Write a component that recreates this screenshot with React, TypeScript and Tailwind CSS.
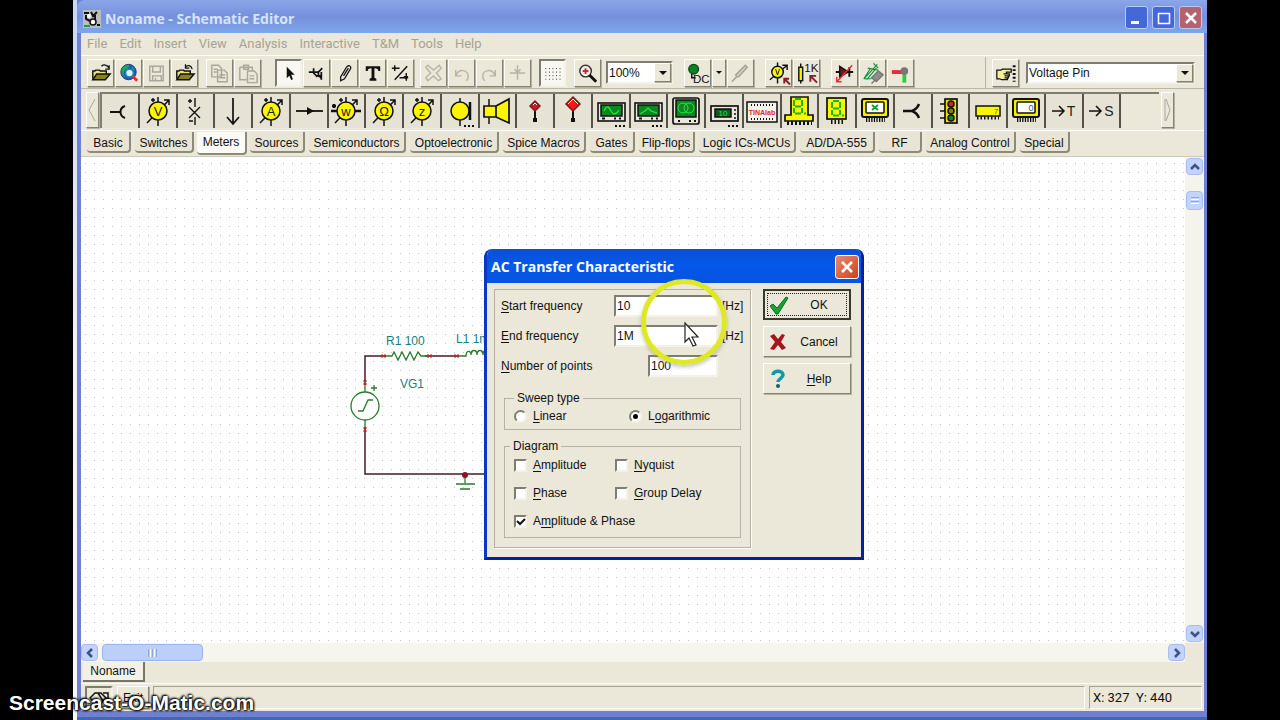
import React, { useState } from "react";

const raised =
  "border border-t-white border-l-white border-r-[#85826f] border-b-[#85826f] shadow-[1px_1px_0_#b5b2a0]";
const sunken =
  "border-2 border-t-[#7f7d70] border-l-[#7f7d70] border-r-[#f4f2e8] border-b-[#f4f2e8]";

const menus = ["File", "Edit", "Insert", "View", "Analysis", "Interactive", "T&M", "Tools", "Help"];

const tabs = [
  { name: "Basic", width: "w-11" },
  { name: "Switches", width: "w-[59px]" },
  { name: "Meters", width: "w-[50px]" },
  { name: "Sources", width: "w-[55px]" },
  { name: "Semiconductors", width: "w-[97px]" },
  { name: "Optoelectronic", width: "w-[89px]" },
  { name: "Spice Macros", width: "w-[83px]" },
  { name: "Gates", width: "w-[45px]" },
  { name: "Flip-flops", width: "w-14" },
  { name: "Logic ICs-MCUs", width: "w-[97px]" },
  { name: "AD/DA-555", width: "w-[75px]" },
  { name: "RF", width: "w-[43px]" },
  { name: "Analog Control", width: "w-[90px]" },
  { name: "Special", width: "w-[50px]" },
];

const Svg = ({ children }: { children: React.ReactNode }) => (
  <svg viewBox="0 0 26 26" className="h-[26px] w-[26px]" fill="none" stroke="#111" strokeWidth="1.5">
    {children}
  </svg>
);

const Tool = ({
  label,
  pressed,
  children,
}: {
  label: string;
  pressed?: boolean;
  children: React.ReactNode;
}) => (
  <button
    type="button"
    aria-label={label}
    className={`flex h-7 w-[27px] shrink-0 items-center justify-center overflow-hidden ${
      pressed ? `bg-[#f8f7f1] ${sunken}` : `bg-[#ebe8d9] ${raised}`
    }`}
  >
    {children}
  </button>
);

const Group = ({ children }: { children: React.ReactNode }) => (
  <div className="flex items-center gap-px">{children}</div>
);

const FolderIcon = ({ back }: { back?: boolean }) => (
  <Svg>
    <path d="M5 19V11h2l1-1h4l1 1h6v3" fill="#e8e27a" />
    <path d="M5 20l4-6h14l-5 6z" fill="#85841c" />
    {back ? (
      <path d="M14 7c2-3 6-2 7 2M14 4v4h4" strokeWidth="1.3" />
    ) : (
      <path d="M14 6c2-2 6-2 8 2M22 5v4h-4" strokeWidth="1.3" />
    )}
  </Svg>
);

const Meter = ({ letter, side }: { letter: string; side?: boolean }) => (
  <>
    <path d="M6 29L28 6M23 6h5v5M17 3v6M17 26v6M10 6h4M12 4v4" strokeWidth="1.5" />
    {side && <path d="M2 17h30M3 12h4M5 10v4" strokeWidth="2.4" />}
    <circle cx="17" cy="17" r="9" fill="#fbf500" strokeWidth="1.5" />
    <text x="17" y="22" textAnchor="middle" fontSize="13" fill="#222" stroke="none">
      {letter}
    </text>
  </>
);

const Dots = () => <path d="M21 32h10" strokeWidth="2" strokeDasharray="2 2" />;

const Scope = ({ wave }: { wave: string }) => (
  <>
    <rect x="4" y="9" width="27" height="18" fill="#e9e7dc" strokeWidth="1.6" />
    <rect x="7" y="11" width="21" height="11" fill="#068a1c" />
    <path d={wave} stroke="#35e04f" strokeWidth="1.2" />
    <path d="M8 24.5h3M20 24.5h2M25 24.5h2" strokeWidth="2" />
    <Dots />
  </>
);

const Seven = ({ x, y }: { x: number; y: number }) => (
  <path
    transform={`translate(${x} ${y})`}
    d="M1 0h6M0 1v6M8 1v6M1 7.500h6M0 9v5M8 9v5M1 14.500h6M10 14.500h2"
    stroke="#19b31b"
    strokeWidth="2"
  />
);

const Screen = ({ children }: { children: React.ReactNode }) => (
  <>
    <rect x="4" y="5" width="26" height="18" rx="2" fill="#f7ee00" strokeWidth="2" />
    <rect x="8" y="8" width="18" height="11" rx="1" fill="#fff" />
    <path d="M8 26h19" strokeWidth="4" strokeDasharray="1.300 1.300" />
    {children}
  </>
);

const parts: { name: string; icon: React.ReactNode }[] = [
  { name: "Voltage Pin", icon: <path d="M7 18h9M22 12c-6 2-6 10 0 12M16 18h2" strokeWidth="2" /> },
  { name: "Voltmeter", icon: <Meter letter="V" /> },
  {
    name: "Open Circuit",
    icon: <path d="M17 4v9M17 23v8M11 13l11 11M22 13L11 24M10 7h4M12 5v4M11 27h4" strokeWidth="1.4" />,
  },
  { name: "Voltage Arrow", icon: <path d="M17 4v26M11 23l6 7 6-7" strokeWidth="1.7" /> },
  { name: "Ammeter", icon: <Meter letter="A" /> },
  {
    name: "Current Arrow",
    icon: (
      <>
        <path d="M4 17h27" strokeWidth="1.8" />
        <path d="M15 13l7 4-7 4z" fill="#111" stroke="none" />
      </>
    ),
  },
  { name: "Power Meter", icon: <Meter letter="w" side /> },
  { name: "Ohmmeter", icon: <Meter letter="Ω" /> },
  { name: "Impedance Meter", icon: <Meter letter="z" /> },
  {
    name: "Microphone",
    icon: (
      <>
        <path d="M17 4v28" />
        <circle cx="17" cy="17" r="9" fill="#fbf500" />
        <path d="M27 8v18" strokeWidth="2.5" />
        <Dots />
      </>
    ),
  },
  {
    name: "Loudspeaker",
    icon: (
      <>
        <path d="M9 5v25" />
        <path d="M4 12h12v11H4zM16 12l13-7v24l-13-6z" fill="#fbf500" strokeWidth="1.700" />
      </>
    ),
  },
  {
    name: "Logic Indicator",
    icon: (
      <>
        <path d="M17 17v8" strokeWidth="2" />
        <path d="M17 7l5 5-5 5-5-5z" fill="#c21d2c" stroke="#772020" />
        <path d="M15 11l2-2 2 2" stroke="#fff" strokeWidth="1" />
        <rect x="15" y="24" width="4" height="4" fill="#111" stroke="none" />
      </>
    ),
  },
  {
    name: "Probe Lamp",
    icon: (
      <>
        <path d="M17 16v9" strokeWidth="2" />
        <path d="M17 3l7 7-7 7-7-7z" fill="#f31919" stroke="#772020" />
        <path d="M12 10l5-5 5 5" stroke="#fff" strokeWidth="1" />
        <rect x="15" y="24" width="4" height="4" fill="#111" stroke="none" />
      </>
    ),
  },
  { name: "Oscilloscope", icon: <Scope wave="M10 17c3-7 5-4 7 0s5 4 8-1" /> },
  { name: "Signal Analyzer", icon: <Scope wave="M9 20l5-3 3-3 3 3 6 2" /> },
  {
    name: "XY Recorder",
    icon: (
      <>
        <rect x="4" y="4" width="26" height="26" rx="2" fill="#e9e7dc" strokeWidth="1.700" />
        <rect x="7" y="6" width="20" height="17" fill="#068a1c" />
        <circle cx="14" cy="14" r="5" stroke="#35e04f" strokeWidth="1" />
        <circle cx="20" cy="14" r="5" stroke="#35e04f" strokeWidth="1" />
        <path d="M9 27h2M20 27h2M25 27h2" strokeWidth="2" />
      </>
    ),
  },
  {
    name: "Multimeter",
    icon: (
      <>
        <rect x="4" y="12" width="27" height="15" fill="#e9e7dc" strokeWidth="1.700" />
        <rect x="8" y="15" width="16" height="8" fill="#05601a" />
        <text x="16" y="22" textAnchor="middle" fontSize="8" fill="#36e04f" stroke="none">10</text>
        <path d="M27 16h2M27 20h2M27 24h2" />
        <Dots />
      </>
    ),
  },
  {
    name: "TINALab",
    icon: (
      <>
        <rect x="2" y="8" width="30" height="20" fill="#f5f3ea" />
        <path d="M6 11h22M6 25h22" strokeWidth="2" strokeDasharray="1 2" />
        <text x="17" y="21" textAnchor="middle" fontSize="7" fontWeight="bold" fill="#e02a2a" stroke="none">TINAlab</text>
      </>
    ),
  },
  {
    name: "Decoded 7 Segment",
    icon: (
      <>
        <path d="M9 3h17v18h5v6H3v-6h6z" fill="#fbf500" strokeWidth="1.700" />
        <Seven x={12} y={5} />
        <path d="M5 29h25" strokeWidth="4" strokeDasharray="2 2" />
      </>
    ),
  },
  {
    name: "7 Segment",
    icon: (
      <>
        <rect x="7" y="4" width="19" height="21" fill="#fbf500" strokeWidth="1.700" />
        <Seven x={12} y={7} />
        <path d="M11 28h12" strokeWidth="4" strokeDasharray="1.500 2" />
      </>
    ),
  },
  {
    name: "Matrix Display",
    icon: (
      <Screen>
        <path d="M14 11l6 5M20 11l-6 5" stroke="#19a32b" strokeWidth="2" />
      </Screen>
    ),
  },
  { name: "Logic Pin", icon: <path d="M7 17h10M23 10c-2 5-4 6-7 7 3 1 5 2 7 7" strokeWidth="2.500" /> },
  {
    name: "Traffic Light",
    icon: (
      <>
        <rect x="12" y="5" width="12" height="24" fill="#e9e200" strokeWidth="1.700" />
        <path d="M7 10h5M7 17h5M7 24h5" />
        <circle cx="18" cy="10" r="3" fill="#d3222a" />
        <circle cx="18" cy="17" r="3" fill="#80801a" />
        <circle cx="18" cy="24" r="3" fill="#13851c" />
      </>
    ),
  },
  {
    name: "Digit Display",
    icon: (
      <>
        <rect x="5" y="12" width="24" height="10" fill="#fbf500" />
        <path d="M6 24h22" strokeWidth="3" strokeDasharray="1.500 2" />
        <text x="25" y="20" textAnchor="middle" fontSize="8" fill="#128420" stroke="none">7</text>
      </>
    ),
  },
  {
    name: "LCD Display",
    icon: (
      <Screen>
        <text x="22" y="17" textAnchor="middle" fontSize="9" fill="#2b6170" stroke="none">0</text>
      </Screen>
    ),
  },
  {
    name: "Digital Terminal",
    icon: (
      <>
        <path d="M5 17h12M12 12l5 5-5 5" />
        <text x="24" y="22" textAnchor="middle" fontSize="14" fill="#222" stroke="none">T</text>
      </>
    ),
  },
  {
    name: "Digital Source",
    icon: (
      <>
        <path d="M5 17h12M12 12l5 5-5 5" />
        <text x="25" y="22" textAnchor="middle" fontSize="14" fill="#222" stroke="none">S</text>
      </>
    ),
  },
];

const DropArrow = () => (
  <span
    className={`pointer-events-none absolute top-[2px] right-[2px] bottom-[2px] flex w-[17px] items-center justify-center bg-[#ebe8d9] ${raised}`}
  >
    <svg viewBox="0 0 8 4" className="h-1 w-2">
      <path d="M0 0h8L4 4z" fill="#111" />
    </svg>
  </span>
);

const Chevron = ({ d }: { d: string }) => (
  <svg viewBox="0 0 10 10" className="h-[10px] w-[10px]" fill="none" stroke="#3c5386" strokeWidth="2.500">
    <path d={d} />
  </svg>
);

const scrollButton =
  "flex h-[17px] w-[17px] shrink-0 items-center justify-center rounded-sm border border-[#a9bdec] bg-[#c3d3fb]";

const Toolbar = () => (
  <div className="flex h-[34px] items-center border-t border-b border-t-white border-b-[#bab7a6] pt-px pr-[9px] pl-[6px]">
    <Group>
      <Tool label="Open"><FolderIcon /></Tool>
      <Tool label="Open from web">
        <Svg>
          <circle cx="13" cy="12" r="8" fill="#2257c9" stroke="#1d3c8d" strokeWidth="1" />
          <path d="M6 9c2-4 6-5 8-4l-2 4-3 1-1 4 2 4c-3-2-5-5-4-9zM16 6l4 3-3 1z" fill="#1fa64c" stroke="none" />
          <circle cx="14" cy="13" r="4" fill="#d9f4ff" stroke="#178ab0" />
          <path d="M17 16l5 5" stroke="#e0332c" strokeWidth="3" />
        </Svg>
      </Tool>
      <Tool label="Save">
        <Svg>
          <path d="M6 6h14v15H6zM9 6v6h8V6M9 21v-5h9v5M12 21v-3" stroke="#aaa798" />
        </Svg>
      </Tool>
      <Tool label="Close"><FolderIcon back /></Tool>
    </Group>
    <div className="ml-2">
      <Group>
        <Tool label="Copy">
          <Svg>
            <path d="M5 5h7l3 3v9H5zM11 10h7l3 3v9H11zM7 9h4M7 12h3M13 15h6M13 18h6" stroke="#aaa798" />
          </Svg>
        </Tool>
        <Tool label="Paste">
          <Svg>
            <path d="M5 7h13v4M5 7v13h7M9 5h5v4H9zM13 11h7l3 3v9H13zM15 16h5M15 19h5" stroke="#aaa798" />
          </Svg>
        </Tool>
      </Group>
    </div>
    <div className="ml-[14px]">
      <Group>
        <Tool label="Select" pressed>
          <Svg><path d="M11 6v13l3-3 2 5 2-1-2-5h4z" fill="#111" stroke="none" /></Svg>
        </Tool>
        <Tool label="Last component">
          <Svg>
            <path d="M5 12h10M10 8v5l4 4M19 8l-4 4M15 11v4M18 12v8" strokeWidth="1.800" />
            <path d="M12 15h6v4z" fill="#111" stroke="none" />
          </Svg>
        </Tool>
        <Tool label="Wire">
          <Svg><path d="M9 17l6-10c2-3 6-1 4 2l-6 10-4 2zM12 16l5-8" strokeWidth="1.300" /></Svg>
        </Tool>
        <Tool label="Text">
          <Svg>
            <path d="M6 6h15v5h-2c0-2-1-3-4-3v10l2 1v2h-7v-2l2-1V8c-3 0-4 1-4 3H6z" fill="#111" stroke="none" />
          </Svg>
        </Tool>
        <Tool label="Hide values">
          <Svg>
            <path d="M4 8h8M7 5v6M7 20L20 6M12 18h9M19 13v8" />
            <path d="M16 16h5l-2 4z" fill="#111" stroke="none" />
          </Svg>
        </Tool>
      </Group>
    </div>
    <div className="ml-[6px]">
      <Group>
        <Tool label="Delete">
          <Svg><path d="M7 5l6 5 6-5 2 3-5 5 5 6-3 2-5-5-6 5-2-3 5-5-5-6z" stroke="#b7b4a5" /></Svg>
        </Tool>
        <Tool label="Undo">
          <Svg><path d="M7 10v6h6M7 16c3-8 13-7 13 1 0 2-1 3-2 4" stroke="#b7b4a5" /></Svg>
        </Tool>
        <Tool label="Redo">
          <Svg><path d="M19 10v6h-6M19 16C16 8 6 9 6 17c0 2 1 3 2 4" stroke="#b7b4a5" /></Svg>
        </Tool>
        <Tool label="Junction">
          <Svg><path d="M5 13h16M13 5v15M10 9l3 4 3-4" stroke="#b7b4a5" /></Svg>
        </Tool>
      </Group>
    </div>
    <div className="ml-2">
      <Tool label="Grid" pressed>
        <Svg><path d="M5 8h17M5 12h17M5 16h17M5 20h17" strokeWidth="1" strokeDasharray="1 3" /></Svg>
      </Tool>
    </div>
    <div className="ml-2">
      <Tool label="Zoom">
        <Svg>
          <circle cx="11" cy="11" r="6" fill="#f5f3ea" stroke="#333" />
          <path d="M8 11h6M11 8v6" stroke="#d02436" strokeWidth="2" />
          <path d="M15 15l7 7" strokeWidth="3" />
        </Svg>
      </Tool>
    </div>
    <div className="relative ml-[5px] w-[67px]">
      <select
        aria-label="Zoom level"
        className={`block h-[23px] w-full appearance-none bg-white pl-px text-[12px] leading-none ${sunken}`}
      >
        <option>100%</option>
      </select>
      <DropArrow />
    </div>
    <div className="ml-[11px]">
      <Group>
        <Tool label="DC mode">
          <Svg>
            <circle cx="9" cy="9" r="5" fill="#0c8222" stroke="#0b4f16" />
            <path d="M7 14v4h4" />
            <text x="17" y="23" textAnchor="middle" fontSize="12" fill="#111" stroke="none">DC</text>
          </Svg>
        </Tool>
        <button
          type="button"
          aria-label="Mode list"
          className={`flex h-7 w-[14px] items-center justify-center ${raised}`}
        >
          <svg viewBox="0 0 6 3" className="h-[3px] w-[6px]"><path d="M0 0h6L3 3z" fill="#111" /></svg>
        </button>
        <Tool label="Probe">
          <Svg><path d="M4 22l5-5M9 17l-1-2L18 5l2 2L11 17z" stroke="#a5a294" fill="#d3d0c2" /></Svg>
        </Tool>
      </Group>
    </div>
    <div className="ml-[11px]">
      <Group>
        <Tool label="Set voltage">
          <Svg>
            <path d="M4 20L22 5M17 5h5v5M12 2v22" />
            <circle cx="12" cy="12" r="6" fill="#fbf500" />
            <path d="M10 9l2 6 2-6" strokeWidth="1" />
            <path d="M25 25l-6-6M19 24v-5h5" stroke="#851d2c" strokeWidth="2" />
          </Svg>
        </Tool>
        <Tool label="Set value">
          <Svg>
            <path d="M7 3v4M7 21v3" />
            <rect x="5" y="7" width="4" height="14" fill="#fbf500" />
            <text x="18" y="12" textAnchor="middle" fontSize="12" fill="#111" stroke="none">1K</text>
            <path d="M24 23l-7-7M17 22v-6h6" stroke="#851d2c" strokeWidth="2" />
          </Svg>
        </Tool>
      </Group>
    </div>
    <div className="ml-[11px]">
      <Group>
        <Tool label="Diode">
          <Svg>
            <path d="M4 12h18M18 7v10" strokeWidth="2" />
            <path d="M8 6l9 6-9 5z" fill="#711520" />
            <path d="M21 5L5 22M5 17v5h5" stroke="#e42c2c" strokeWidth="1.500" />
          </Svg>
        </Tool>
        <Tool label="3D view">
          <Svg>
            <path d="M4 19L18 4M4 19l7-11M7 20L17 8M8 8l11 2M4 19h8M14 3l5 5" stroke="#15913b" strokeWidth="1.200" />
            <path d="M12 18l7-7 5 4-7 7z" fill="#8d8d8a" stroke="#777" />
            <path d="M12 24l4-4" stroke="#777" />
          </Svg>
        </Tool>
        <Tool label="Breadboard">
          <Svg>
            <path d="M4 12h11" stroke="#e82b35" strokeWidth="4" />
            <path d="M17 14v9" stroke="#27cf3d" strokeWidth="4" />
            <circle cx="17" cy="11" r="4" fill="#777" stroke="none" />
          </Svg>
        </Tool>
      </Group>
    </div>
    <div className="ml-auto flex h-full items-center border-l border-[#b7b4a4] pl-[6px]">
      <Tool label="Find component">
        <Svg>
          <path
            d="M4 10h4l2-1h9v3h-5v2h3v2h-1v2h-1v2H9l-2-1H4zM14 14h-3M16 16h-4M15 18h-3"
            fill="#f6efa0"
            strokeWidth="1.300"
          />
          <path d="M22 5v17" strokeWidth="3" strokeDasharray="2 2" />
        </Svg>
      </Tool>
      <div className="relative ml-[7px] w-[169px]">
        <select
          aria-label="Component"
          className={`block h-[22px] w-full appearance-none bg-white pl-px text-[12px] leading-none ${sunken}`}
        >
          <option>Voltage Pin</option>
        </select>
        <DropArrow />
      </div>
    </div>
  </div>
);

const Palette = () => (
  <div className="flex h-[41px] items-center pr-[30px] pl-[5px]">
    <button type="button" aria-label="Scroll left" className={`h-9 w-[13px] ${raised}`}>
      <svg viewBox="0 0 11 34" className="h-full w-full" fill="none" stroke="#aaa798">
        <path d="M8 6L2 17l6 11" />
      </svg>
    </button>
    <div className="ml-px grid h-9 flex-1 grid-cols-[repeat(28,minmax(0,1fr))] border-t-2 border-l-2 border-[#7f7d70]">
      {parts.map((part) => (
        <button
          key={part.name}
          type="button"
          aria-label={part.name}
          className="flex justify-center border-r-2 border-[#55534a] bg-[#e6e3d4]"
        >
          <svg
            viewBox="0 0 34 34"
            className="h-[34px] w-[34px] shrink-0"
            fill="none"
            stroke="#111"
            strokeWidth="1.500"
          >
            {part.icon}
          </svg>
        </button>
      ))}
    </div>
    <button type="button" aria-label="Scroll right" className={`ml-[2px] h-9 w-[13px] ${raised}`}>
      <svg viewBox="0 0 11 34" className="h-full w-full" fill="none" stroke="#aaa798">
        <path d="M3 6v22M4 6l4 11-4 11" />
      </svg>
    </button>
  </div>
);

const Schematic = () => (
  <svg className="absolute inset-0 h-full w-full" fill="none" stroke="#2c7a2e" strokeWidth="1.300">
    <defs>
      <pattern id="dots" width="9" height="9" patternUnits="userSpaceOnUse">
        <rect x="4" y="6" width="1" height="1" fill="#c4c4c4" stroke="none" />
      </pattern>
    </defs>
    <rect width="100%" height="100%" fill="url(#dots)" stroke="none" />
    <g transform="translate(-81 -157)">
      <path d="M384 356h-19v28M425 356h34M365 429v45h130" stroke="#4a1a24" strokeWidth="1.500" />
      <path d="M384 356h8l2-4 4 8 4-8 4 8 4-8 4 8 4-8 3 4h10M459 356h7c0-6 5-6 5-1 0-6 6-6 6 0 0-6 6-6 6 0 0-6 6-6 6 0" />
      <path d="M365 384v8M365 420v8" />
      <circle cx="365" cy="406" r="14" fill="#fff" />
      <path d="M358 411h5l5-11h5M465 475v8M456 484h19M460 489h10M371 388h6M374 385v6" />
      <path d="M381 356h5M427 356h5M454 356h5M365 380v5M365 427v5" stroke="#b82a2a" strokeWidth="3" strokeDasharray="2 1" />
      <circle cx="465" cy="475" r="3" fill="#8c1420" stroke="none" />
      <g className="text-[12px]" fill="#157f82" stroke="none">
        <text x="386" y="345">R1 100</text>
        <text x="456" y="343">L1 1m</text>
        <text x="400" y="388">VG1</text>
      </g>
    </g>
  </svg>
);

const Key = ({ text, at = 0 }: { text: string; at?: number }) => (
  <span>
    {text.slice(0, at)}
    <span className="underline underline-offset-2">{text[at]}</span>
    {text.slice(at + 1)}
  </span>
);

const Check = ({
  label,
  at,
  checked,
  onChange,
}: {
  label: string;
  at?: number;
  checked: boolean;
  onChange: () => void;
}) => (
  <label className="flex items-center gap-[6px] whitespace-nowrap">
    <span className="relative h-[13px] w-[13px]">
      <input
        type="checkbox"
        checked={checked}
        onChange={onChange}
        className={`block h-[13px] w-[13px] appearance-none bg-white ${sunken}`}
      />
      {checked && (
        <svg viewBox="0 0 13 13" className="pointer-events-none absolute inset-0" fill="none" stroke="#111" strokeWidth="2">
          <path d="M3 6l3 3 5-5" />
        </svg>
      )}
    </span>
    <Key text={label} at={at} />
  </label>
);

const DialogButton = ({
  icon,
  primary,
  children,
}: {
  icon: React.ReactNode;
  primary?: boolean;
  children: React.ReactNode;
}) => (
  <button
    type="button"
    className={`relative flex h-[31px] w-[88px] items-center bg-[#ebe8d9] pl-1 ${
      primary ? "border-2 border-[#3a3a2c]" : raised
    }`}
  >
    {primary && <span className="absolute inset-[2px] border border-dotted border-[#222]" />}
    <svg viewBox="0 0 20 20" className="h-5 w-5">{icon}</svg>
    <span className="flex-1 text-center">{children}</span>
  </button>
);

const fieldClass = `h-[22px] bg-white px-px outline-none ${sunken}`;

const Dialog = () => {
  const [sweep, setSweep] = useState("Logarithmic");
  const [diagrams, setDiagrams] = useState<string[]>(["Amplitude & Phase"]);

  const toggle = (name: string) =>
    setDiagrams(diagrams.includes(name) ? diagrams.filter((d) => d !== name) : [...diagrams, name]);

  return (
    <div
      role="dialog"
      aria-label="AC Transfer Characteristic"
      className="absolute top-[249px] left-[484px] w-[380px] overflow-hidden rounded-t-lg border-[3px] border-t-0 border-[#0a37c4] border-r-[#0620a0] border-b-[#0620a0] bg-[#ebe8d9]"
    >
      <div className="flex h-[34px] items-center justify-between bg-linear-to-b from-[#0a4fd6] via-[#0558ea] to-[#0653e0] pt-[2px] pr-[2px] pl-1">
        <h2 className="font-['Open_Sans','Noto_Sans',sans-serif] text-[14px] font-bold text-white">
          AC Transfer Characteristic
        </h2>
        <button
          type="button"
          aria-label="Close dialog"
          className="flex h-6 w-6 items-center justify-center rounded-[3px] border border-white bg-linear-to-br from-[#e88a6a] to-[#cf3d18]"
        >
          <svg viewBox="0 0 14 14" className="h-[14px] w-[14px]" stroke="#fff" strokeWidth="2.500">
            <path d="M2 2l10 10M12 2L2 12" />
          </svg>
        </button>
      </div>
      <div className="flex items-start gap-3 px-[7px] pt-[6px] pb-[9px]">
        <div className="w-[257px] border border-[#b5b2a3] px-[9px] pt-[5px] pb-[9px] shadow-[1px_1px_0_#fff]">
          <div className="-mx-[3px] flex flex-col gap-2">
            <div className="flex h-[22px] items-center">
              <label htmlFor="start" className="w-[113px]"><Key text="Start frequency" /></label>
              <input id="start" defaultValue="10" className={`w-[104px] ${fieldClass}`} />
              <span className="ml-1">[Hz]</span>
            </div>
            <div className="flex h-[22px] items-center">
              <label htmlFor="end" className="w-[113px]"><Key text="End frequency" /></label>
              <input id="end" defaultValue="1M" className={`w-[104px] ${fieldClass}`} />
              <span className="ml-1">[Hz]</span>
            </div>
            <div className="flex h-[22px] items-center">
              <label htmlFor="points" className="w-[147px]"><Key text="Number of points" /></label>
              <input id="points" defaultValue="100" className={`w-[70px] ${fieldClass}`} />
            </div>
          </div>
          <fieldset className="mt-[13px] grid h-[40px] min-w-0 grid-cols-[115px_1fr] items-start border border-[#b5b2a3] pl-[9px]">
            <legend className="px-[3px] leading-4">Sweep type</legend>
            {["Linear", "Logarithmic"].map((name) => (
              <label key={name} className="flex items-center gap-[6px] leading-5">
                <span className="relative h-[13px] w-[13px]">
                  <input
                    type="radio"
                    name="sweep"
                    checked={sweep === name}
                    onChange={() => setSweep(name)}
                    className={`block h-[13px] w-[13px] appearance-none rounded-full bg-white ${sunken}`}
                  />
                  {sweep === name && (
                    <span className="pointer-events-none absolute top-1 left-1 h-[5px] w-[5px] rounded-full bg-black" />
                  )}
                </span>
                <Key text={name} at={name === "Linear" ? 0 : 1} />
              </label>
            ))}
          </fieldset>
          <fieldset className="mt-2 min-w-0 border border-[#b5b2a3] pt-px pr-2 pb-[6px] pl-[9px]">
            <legend className="-ml-1 px-[3px] leading-4">Diagram</legend>
            <div className="grid grid-cols-[101px_1fr] gap-y-2 leading-5">
              <Check label="Amplitude" checked={diagrams.includes("Amplitude")} onChange={() => toggle("Amplitude")} />
              <Check label="Nyquist" checked={diagrams.includes("Nyquist")} onChange={() => toggle("Nyquist")} />
              <Check label="Phase" checked={diagrams.includes("Phase")} onChange={() => toggle("Phase")} />
              <Check label="Group Delay" checked={diagrams.includes("Group Delay")} onChange={() => toggle("Group Delay")} />
              <Check
                label="Amplitude & Phase"
                at={1}
                checked={diagrams.includes("Amplitude & Phase")}
                onChange={() => toggle("Amplitude & Phase")}
              />
            </div>
          </fieldset>
        </div>
        <div className="flex flex-col gap-[6px]">
          <DialogButton
            primary
            icon={<path d="M1 11l3-2 4 4 9-11 2 1L9 19H7z" fill="#16a336" stroke="#0b6a20" strokeWidth="1" />}
          >
            OK
          </DialogButton>
          <DialogButton icon={<path d="M2 4l4-2 4 5 4-5 3 1-4 7 5 6-4 2-4-5-4 5-4-1 5-7z" fill="#a8141c" />}>
            Cancel
          </DialogButton>
          <DialogButton
            icon={
              <>
                <path d="M5 6c0-5 10-5 10 0 0 3-5 4-5 7" fill="none" stroke="#1296a8" strokeWidth="3.500" />
                <circle cx="10" cy="17" r="2" fill="#0d5f78" />
              </>
            }
          >
            <Key text="Help" />
          </DialogButton>
        </div>
      </div>
    </div>
  );
};

const captionButton = "flex h-[23px] w-[23px] items-center justify-center rounded-[3px] border border-[#b9caf3]";

export default function App() {
  const [activeTab, setActiveTab] = useState("Meters");

  return (
    <div className="relative flex h-screen overflow-hidden bg-black pr-[73px] pl-[73px] font-['Liberation_Sans',Arial,sans-serif] text-[12px] leading-4 text-[#111]">
      <div className="w-1 shrink-0 bg-linear-to-b from-[#c9d7f5] via-[#f4f4f4] to-[#f8f8f8]" />
      <div className="flex min-w-0 flex-1 flex-col border-b-[3px] border-[#4468ad] bg-[#6f80d4]">
        <header className="flex h-[33px] shrink-0 items-center justify-between rounded-tl-lg bg-linear-to-b from-[#8aa6e8] via-[#7690dc] to-[#7ea6ea] pr-[5px] pl-[6px]">
          <div className="flex items-center gap-1 pt-1">
            <svg viewBox="0 0 18 18" className="h-[18px] w-[18px]" fill="none" stroke="#111" strokeWidth="2">
              <rect width="18" height="18" fill="#b9bdbd" stroke="none" />
              <path d="M1 3h5M8 2l2 4 4-4M3 5v4l4 2M12 5v7M14 15h3" />
              <circle cx="6" cy="6" r="2" fill="#fff" stroke="none" />
              <circle cx="10" cy="12" r="3" fill="#fff" strokeWidth="1.500" />
              <path d="M1 16h6" stroke="#2c9141" />
            </svg>
            <h1 className="font-['Open_Sans','Noto_Sans',sans-serif] text-[14px] font-bold text-[#d8e4fb]">
              Noname - Schematic Editor
            </h1>
          </div>
          <div className="flex gap-1 pt-[2px]">
            <button type="button" aria-label="Minimize" className={`bg-[#4468d8] ${captionButton}`}>
              <svg viewBox="0 0 14 14" className="h-[14px] w-[14px]"><path d="M1 10h8v3H1z" fill="#fff" /></svg>
            </button>
            <button type="button" aria-label="Maximize" className={`bg-[#4468d8] ${captionButton}`}>
              <svg viewBox="0 0 14 14" className="h-[14px] w-[14px]" fill="none" stroke="#fff">
                <path d="M1.500 2v10.500h11V2M1 2.500h12" strokeWidth="1.500" />
              </svg>
            </button>
            <button type="button" aria-label="Close" className={`bg-[#b5616e] ${captionButton}`}>
              <svg viewBox="0 0 14 14" className="h-[14px] w-[14px]" stroke="#fff" strokeWidth="2.500">
                <path d="M2 2l10 10M12 2L2 12" />
              </svg>
            </button>
          </div>
        </header>

        <div className="mr-[3px] mb-[6px] ml-1 flex min-h-0 flex-1 flex-col bg-[#ebe8d9]">
          <nav className="flex h-[22px] shrink-0 items-center gap-3 pl-[6px] font-['Roboto',sans-serif] text-[13px] text-[#a6a393]">
            {menus.map((menu) => (
              <button key={menu} type="button">{menu}</button>
            ))}
          </nav>
          <Toolbar />
          <Palette />
          <div className="flex h-[27px] shrink-0 items-start gap-1 border-t border-b border-t-white border-b-[#cdcaba] pt-px pl-[6px]">
            {tabs.map((tab) => (
              <button
                key={tab.name}
                type="button"
                onClick={() => setActiveTab(tab.name)}
                className={`shrink-0 rounded-b-sm border-r-2 border-b-2 border-[#8d8a79] pt-[2px] text-center whitespace-nowrap ${tab.width} ${
                  activeTab === tab.name ? "-mx-px h-[23px] bg-[#fbfaf4] pb-1" : "h-[21px] bg-[#e8e5d6]"
                }`}
              >
                {tab.name}
              </button>
            ))}
          </div>

          <div className="flex min-h-0 flex-1">
            <main className="relative min-w-0 flex-1 overflow-hidden bg-white">
              <Schematic />
            </main>
            <div className="flex w-[19px] flex-col items-center bg-[#f4f3ec] py-px">
              <button type="button" aria-label="Scroll up" className={scrollButton}><Chevron d="M1 7l4-4 4 4" /></button>
              <div className="mt-4 flex h-[19px] w-[17px] flex-col items-center justify-center gap-px rounded-sm border border-[#a9bdec] bg-[#c3d3fb]">
                <span className="h-px w-2 bg-[#8fa8e0]" />
                <span className="h-px w-2 bg-white" />
                <span className="h-px w-2 bg-[#8fa8e0]" />
                <span className="h-px w-2 bg-white" />
              </div>
              <button type="button" aria-label="Scroll down" className={`mt-auto ${scrollButton}`}><Chevron d="M1 3l4 4 4-4" /></button>
            </div>
          </div>
          <div className="mr-[19px] flex h-[19px] shrink-0 items-center bg-[#f6f5ee]">
            <button type="button" aria-label="Scroll page left" className={scrollButton}><Chevron d="M7 1L3 5l4 4" /></button>
            <div className="ml-1 flex h-[17px] w-[101px] items-center justify-center gap-px rounded-sm border border-[#9db4ea] bg-[#bccffb]">
              <span className="h-2 w-px bg-[#8fa8e0]" />
              <span className="h-2 w-px bg-white" />
              <span className="h-2 w-px bg-[#8fa8e0]" />
              <span className="h-2 w-px bg-white" />
              <span className="h-2 w-px bg-[#8fa8e0]" />
            </div>
            <button type="button" aria-label="Scroll page right" className={`ml-auto ${scrollButton}`}><Chevron d="M3 1l4 4-4 4" /></button>
          </div>
          <div className="flex h-[22px] shrink-0 items-start border-b border-white pl-[2px]">
            <button type="button" className="h-5 w-[62px] border-r-2 border-b-2 border-[#77756a] bg-[#f3f1e6]">Noname</button>
          </div>
          <footer className="flex h-[27px] shrink-0 items-stretch gap-1 pt-[2px] pr-[2px] pb-[2px] pl-1">
            <button type="button" aria-label="Schematic view" className={`flex w-7 justify-center ${sunken}`}>
              <svg viewBox="0 0 22 16" className="mt-[2px] h-4 w-[22px]" fill="none" stroke="#111" strokeWidth="1.500">
                <path d="M2 8l5-5h6l5 5-5 5H7zM10 3l5 8M15 3h5v11" />
              </svg>
            </button>
            <button type="button" className={`w-8 ${raised}`}>Exit</button>
            <div className="flex-1 border border-t-[#a3a090] border-r-white border-b-white border-l-[#a3a090]" />
            <div className="flex w-[113px] items-center border border-t-[#a3a090] border-r-white border-b-white border-l-[#a3a090] pl-[3px] font-['Roboto',sans-serif] text-[13px] whitespace-pre">
              X: 327  Y: 440
            </div>
          </footer>
        </div>
      </div>

      <Dialog />

      <div className="pointer-events-none absolute top-[279px] left-[641px] h-[86px] w-[86px] rounded-full border-[5px] border-[#dfe825] shadow-[0_2px_4px_#8888]" />
      <svg viewBox="0 0 16 26" className="pointer-events-none absolute top-[322px] left-[684px] h-[26px] w-4">
        <path d="M1 1v19l4-4 4 8 3-1-4-8h6z" fill="#fff" stroke="#222" strokeWidth="1.200" />
      </svg>
      <p className="pointer-events-none absolute bottom-[5px] left-[9px] text-[21px] leading-6 font-bold text-white [text-shadow:0_0_2px_#000,0_0_3px_#000,1px_1px_2px_#000,-1px_-1px_2px_#000]">
        Screencast-O-Matic.com
      </p>
    </div>
  );
}
